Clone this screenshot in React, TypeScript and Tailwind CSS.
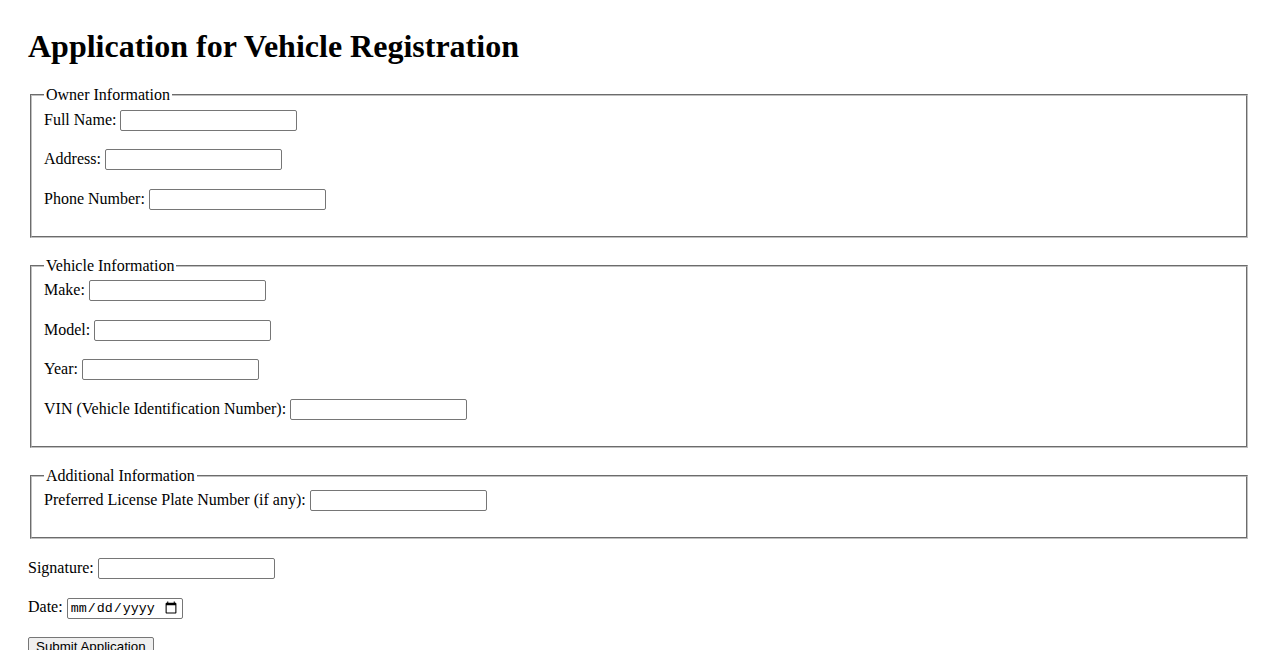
import React from "react";

const inputCls =
  "w-[177px] h-[21px] border border-[#767676] rounded-[2px] px-[2px] py-[1px] text-[13.333px] font-['Arial','Liberation_Sans',sans-serif] bg-white align-baseline";

function Row({ label }: { label: string }) {
  return (
    <div className="mb-[18.4px]">
      <label>{label}</label> <input type="text" className={inputCls} />
    </div>
  );
}

function Fieldset({ legend, rows }: { legend: string; rows: string[] }) {
  return (
    <fieldset className="mx-[2px] mb-[19px] border-2 [border-style:groove] border-[#c0c0c0] px-3 pt-[5.6px] pb-[7.6px]">
      <legend className="px-[2px]">{legend}</legend>
      {rows.map((r) => (
        <Row key={r} label={r} />
      ))}
    </fieldset>
  );
}

export default function App() {
  return (
    <div className="min-h-[650px] bg-white text-black px-[28px] pt-[28px] text-[16px] leading-[normal] font-['Liberation_Serif','Times_New_Roman',serif]">
      <h1 className="text-[32px] font-bold mb-[21.44px]">Application for Vehicle Registration</h1>
      <form>
        <Fieldset legend="Owner Information" rows={["Full Name:", "Address:", "Phone Number:"]} />
        <Fieldset
          legend="Vehicle Information"
          rows={["Make:", "Model:", "Year:", "VIN (Vehicle Identification Number):"]}
        />
        <Fieldset legend="Additional Information" rows={["Preferred License Plate Number (if any):"]} />
        <div className="mb-[18.4px]">
          <label>Signature:</label> <input type="text" className={inputCls} />
        </div>
        <div className="mb-[18.4px]">
          <label>Date:</label>{" "}
          <input
            type="date"
            className="w-[116px] h-[21px] border border-[#767676] rounded-[2px] px-[2px] py-[1px] text-[13.333px] font-['Liberation_Mono','DejaVu_Sans_Mono',monospace] bg-white align-baseline"
          />
        </div>
        <button
          type="submit"
          className="bg-[#efefef] border border-[#767676] rounded-[2px] px-[7px] py-[1px] text-[13.333px] font-['Arial','Liberation_Sans',sans-serif] text-black"
        >
          Submit Application
        </button>
      </form>
    </div>
  );
}
